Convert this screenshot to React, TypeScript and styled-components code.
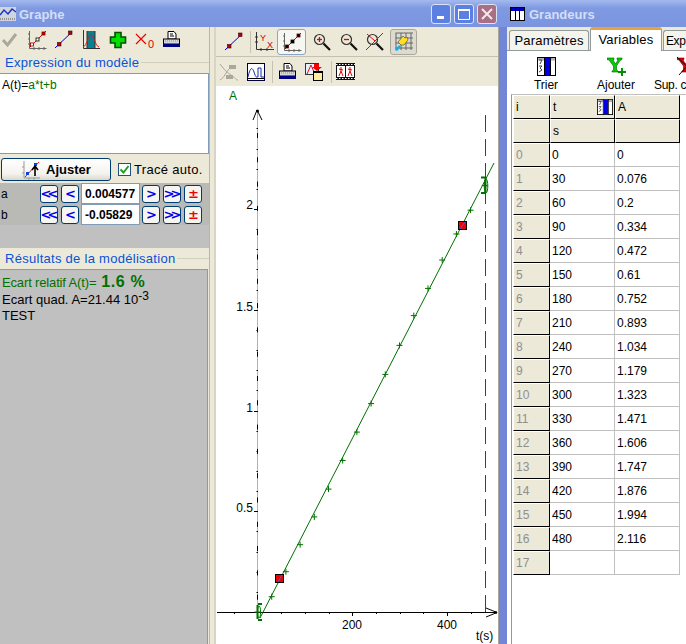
import React from "react";
import styled, { createGlobalStyle } from "styled-components";

const GlobalStyle = createGlobalStyle`
  html, body { margin: 0; padding: 0; background: #fff; }
  * { box-sizing: border-box; }
  #root { width: 686px; height: 644px; overflow: hidden; }
`;

const BEIGE = "#ece9d8";

const measures: [number, number, string][] = [
  [0, 0, "0"],
  [1, 30, "0.076"],
  [2, 60, "0.2"],
  [3, 90, "0.334"],
  [4, 120, "0.472"],
  [5, 150, "0.61"],
  [6, 180, "0.752"],
  [7, 210, "0.893"],
  [8, 240, "1.034"],
  [9, 270, "1.179"],
  [10, 300, "1.323"],
  [11, 330, "1.471"],
  [12, 360, "1.606"],
  [13, 390, "1.747"],
  [14, 420, "1.876"],
  [15, 450, "1.994"],
  [16, 480, "2.116"],
];

const px = (t: number) => 257.5 + 0.4735 * t;
const py = (a: number) => 612 - 201.5 * a;

const PointsIcon = ({ selected }: { selected?: boolean }) => (
  <svg width="20" height="20" viewBox="0 0 20 20">
    <path d="M2.5 1V18.5H19.5M1 14H3M1 9H3M1 4H3M7 17V20M12 17V20M17 17V20" stroke="#666" fill="none" />
    <path d="M3 17L19 1" stroke="#e00000" fill="none" />
    <rect x="3.5" y="13" width="3" height="3" fill={selected ? "#000" : "#fff"} stroke="#700" strokeWidth="0.8" />
    <rect x="9" y="8" width="3" height="3" fill={selected ? "#000" : "#fff"} stroke="#000" strokeWidth="0.8" />
    <rect x="15" y="2" width="3" height="3" fill={selected ? "#000" : "#c00"} stroke="#700" strokeWidth="0.8" />
  </svg>
);

const LineIcon = () => (
  <svg width="20" height="20" viewBox="0 0 20 20">
    <path d="M1 18L18 2" stroke="#0000d8" fill="none" />
    <rect x="3.5" y="12.5" width="3.5" height="3.5" fill="#b00020" stroke="#400" strokeWidth="0.6" />
    <rect x="14.5" y="1" width="3.5" height="3.5" fill="#b00020" stroke="#400" strokeWidth="0.6" />
  </svg>
);

const BellIcon = () => (
  <svg width="20" height="20" viewBox="0 0 20 20">
    <rect x="6" y="1" width="8" height="17" fill="#0a7f8f" />
    <path d="M2.5 0V18.5H19M6 1V18M14 1V18" stroke="#333" fill="none" />
    <path d="M2 17C6 16 7 5 10 5S14 16 18 17" stroke="#f01010" fill="none" />
  </svg>
);

const PlusIcon = () => (
  <svg width="18" height="18" viewBox="0 0 18 18">
    <path d="M6 1.5H12V6H16.5V12H12V16.5H6V12H1.5V6H6Z" fill="#00e000" stroke="#005000" strokeWidth="1.6" />
  </svg>
);

const ZeroIcon = () => (
  <svg width="20" height="18" viewBox="0 0 20 18">
    <path d="M1 3L11 13M11 3L1 13" stroke="#f00000" strokeWidth="1.2" fill="none" />
    <text x="13" y="17" fontFamily="Liberation Sans, sans-serif" fontSize="11" fill="#e00000">0</text>
  </svg>
);

const PrinterIcon = () => (
  <svg width="17" height="17" viewBox="0 0 17 17">
    <path d="M5 .5H11L13 3V8H5Z" fill="#fff" stroke="#000" />
    <path d="M7 3H10M7 5H11" stroke="#000" />
    <rect x=".5" y="8" width="16" height="5" fill="#d8d8d8" stroke="#000" />
    <path d="M2 10H15" stroke="#909090" strokeDasharray="1 1" />
    <rect x="0" y="13" width="17" height="3" fill="#000080" />
  </svg>
);

const CheckMark = () => (
  <svg width="18" height="16" viewBox="0 0 18 16">
    <path d="M2 8L6.5 13L15 2" stroke="#a9a89b" strokeWidth="3" fill="none" />
  </svg>
);

const AxesIcon = () => (
  <svg width="20" height="20" viewBox="0 0 20 20">
    <path d="M1.5 0V17.5H19M0 5H3M0 10H3M6 16V19M12 16V19" stroke="#333" fill="none" />
    <text x="5" y="9" fontFamily="Liberation Sans, sans-serif" fontSize="9" fill="#d00000">Y</text>
    <text x="12" y="16" fontFamily="Liberation Sans, sans-serif" fontSize="9" fill="#d00000">X</text>
  </svg>
);

const ZoomIcon = ({ glyph }: { glyph: "plus" | "minus" | "none" }) => (
  <svg width="18" height="18" viewBox="0 0 18 18">
    <circle cx="6.5" cy="6.5" r="5" fill="none" stroke="#333" strokeWidth="1.2" />
    <path d="M10.5 10.5L17 17" stroke="#111" strokeWidth="2.2" />
    {glyph !== "none" && <path d="M4 6.5H9" stroke="#e00000" strokeWidth="1.3" />}
    {glyph === "plus" && <path d="M6.5 4V9" stroke="#e00000" strokeWidth="1.3" />}
    {glyph === "none" && <path d="M0 17L17 0M1 1L9 8" stroke="#f00000" fill="none" />}
  </svg>
);

const HandGridIcon = () => (
  <svg width="20" height="20" viewBox="0 0 20 20">
    <path d="M1.5 1H19M1.5 6H19M1.5 11H19M1.5 16H19M2 1V18M7 1V18M12 1V18M17 1V18" stroke="#666" fill="none" />
    <path d="M4 10L9 4L11 6L13 5L14 8L10 13L7 13Z" fill="#ffe020" stroke="#555" strokeWidth=".7" />
    <path d="M1 18L5 13L7 15L3 19Z" fill="#10b0f0" />
  </svg>
);

const CurvesIcon = () => (
  <svg width="20" height="20" viewBox="0 0 20 20">
    <path d="M1 2C4 6 7 10 12 13S16 18 19 18M1 18C5 16 7 10 11 6" stroke="#a9a89b" fill="none" />
    <rect x="10" y="3" width="7" height="4" fill="#a9a89b" />
    <rect x="7" y="13" width="7" height="4" fill="#a9a89b" />
  </svg>
);

const ScopeIcon = () => (
  <svg width="18" height="18" viewBox="0 0 18 18">
    <rect x=".5" y=".5" width="17" height="17" fill="#fff" stroke="#000040" />
    <path d="M1 14C3 5 5 3 7 9S9 14 11 14V5H14V14H17" stroke="#1030a0" fill="none" />
    <path d="M1 15.5H17" stroke="#000" />
  </svg>
);

const ExportIcon = () => (
  <svg width="19" height="18" viewBox="0 0 19 18">
    <rect x=".5" y=".5" width="13" height="11" fill="#e8f0ff" stroke="#333" />
    <path d="M2 11L6 2L9 9" stroke="#e01010" fill="none" />
    <rect x="8.5" y="8.5" width="9" height="9" fill="#fff0a0" stroke="#000" />
    <rect x="9" y="8" width="8" height="2" fill="#000" />
    <path d="M9 1H14V4H17L12 8L7 4H9Z" fill="#f00000" />
  </svg>
);

const FilmIcon = () => (
  <svg width="19" height="17" viewBox="0 0 19 17">
    <rect x="0" y="0" width="19" height="17" fill="#111" />
    <path d="M0 1.5H19M0 15.5H19" stroke="#fff" strokeDasharray="1.5 1.5" />
    <rect x="1" y="3" width="8" height="11" fill="#fff" />
    <rect x="10" y="3" width="8" height="11" fill="#fff" />
    <path d="M5 4V8L3 13M5 8L7 13M3 6L7 7M14 4V8L12 13M14 8L16 13M12 6L16 7" stroke="#e00000" fill="none" />
  </svg>
);

const SortIcon = ({ size = 19 }: { size?: number }) => (
  <svg width={size} height={size} viewBox="0 0 19 19">
    <rect x=".5" y=".5" width="18" height="18" fill="#fff" stroke="#000" />
    <rect x="1" y="1" width="17" height="2.5" fill="#b0b0b0" />
    <rect x="8" y="1" width="5" height="17" fill="#0000e0" />
    <path d="M7.5 0V19M13.5 0V19" stroke="#000" />
    <path d="M2 3H5L3 7M2 9H5L3 11L5 13L2 15" stroke="#444" fill="none" />
  </svg>
);

const AddYIcon = () => (
  <svg width="19" height="19" viewBox="0 0 19 19">
    <path d="M0 1H7V2.5L6 3L8.5 7L11 3L10 2.5V1H15V2.5L13 3.5L9.5 9V13L11 14V15H5V14L6.5 13V9L2 3L0 2.5Z" fill="#00d000" stroke="#006000" strokeWidth=".6" />
    <path d="M11 15H19M15 11V19" stroke="#009000" strokeWidth="2" />
  </svg>
);

const RemoveYIcon = () => (
  <svg width="19" height="19" viewBox="0 0 19 19">
    <path d="M0 1H7V2.5L6 3L8.5 7L11 3L10 2.5V1H15V2.5L13 3.5L9.5 9V13L11 14V15H5V14L6.5 13V9L2 3L0 2.5Z" fill="#e80000" stroke="#600" strokeWidth=".6" />
    <path d="M0 0L18 17M18 0L2 18" stroke="#300" fill="none" />
  </svg>
);

const FitIcon = () => (
  <svg width="20" height="20" viewBox="0 0 20 20">
    <path d="M3 1V18H19M1 13H3M1 7H3M8 18V20M13 18V20" stroke="#999" fill="none" />
    <path d="M4 17L18 2" stroke="#f01010" fill="none" />
    <rect x="5" y="12" width="3" height="3" fill="#1040e0" />
    <rect x="13" y="3" width="3" height="3" fill="#1040e0" />
    <path d="M14 6L14 16M11 10L14 6L17 10" stroke="#000" strokeWidth="1.6" fill="none" />
  </svg>
);

const GrapheTitleIcon = () => (
  <svg width="16" height="14" viewBox="0 0 16 14">
    <rect width="16" height="14" fill="#d0d4dc" />
    <path d="M0 12H16" stroke="#555" strokeDasharray="1 1" />
    <path d="M0 8L4 3L8 7L12 2L16 5" stroke="#1530c0" strokeWidth="1.4" fill="none" />
  </svg>
);

const GrandeursTitleIcon = () => (
  <svg width="15" height="14" viewBox="0 0 15 14">
    <rect x=".5" y=".5" width="14" height="13" fill="#fff" stroke="#000" />
    <rect x="1" y="1" width="13" height="3" fill="#0000c0" />
    <path d="M5.5 1V13M9.5 1V13" stroke="#000" />
  </svg>
);

const Graph = () => {
  const ticksY = Array.from({ length: 24 }, (_, i) => i + 1);
  const ticksX = [-1, 1, 2, 3, 4, 5, 6, 7, 8, 9];
  return (
    <GraphCanvas width="282" height="558" viewBox="216 86 282 558">
      <text x="229" y="100" fontFamily="Liberation Sans, sans-serif" fontSize="12" fill="#007000">A</text>
      <path d="M257.5 112V612" stroke="#ff80f4" fill="none" />
      <path d="M257.5 133V612" stroke="#000" strokeDasharray="5 19.3" fill="none" />
      {ticksY.map((i) => (
        <path
          key={i}
          d={`M${i % 5 === 0 ? 254 : 256.5} ${py(i / 10).toFixed(0)}.5H258`}
          stroke="#000"
          fill="none"
        />
      ))}
      <path d="M253 120L257 110L262 120" stroke="#000" fill="none" />
      <circle cx="257.5" cy="111" r="1.5" fill="#000" />
      <path d="M217 612.5H496" stroke="#000" />
      <path d="M486 608L497 612.5L486 617" stroke="#000" fill="none" />
      <circle cx="496" cy="612.5" r="1.2" fill="#000" />
      {ticksX.map((i) => (
        <path
          key={i}
          d={`M${px(i * 50).toFixed(0)}.5 612V${i % 4 === 0 ? 616 : 614}`}
          stroke="#000"
          fill="none"
        />
      ))}
      <g fontFamily="Liberation Sans, sans-serif" fontSize="12" fill="#000">
        <text x="253" y="209" textAnchor="end">2</text>
        <text x="253" y="311" textAnchor="end">1.5</text>
        <text x="253" y="412" textAnchor="end">1</text>
        <text x="253" y="512" textAnchor="end">0.5</text>
        <text x="352" y="629" textAnchor="middle">200</text>
        <text x="447" y="629" textAnchor="middle">400</text>
        <text x="476" y="640">t(s)</text>
      </g>
      <path d="M485.5 115V612" stroke="#007000" strokeDasharray="17 7" fill="none" />
      <path d="M260 618L494 163" stroke="#007000" fill="none" />
      {measures.map(([i, t, a]) => (
        <path
          key={i}
          d={`M${(px(t) - 3).toFixed(1)} ${py(Number(a)).toFixed(1)}h6m-3 -3v6`}
          stroke="#007000"
          fill="none"
        />
      ))}
      <path d="M257.5 605V619" stroke="#007000" strokeWidth="2" fill="none" />
      <ellipse cx="259" cy="612" rx="1.6" ry="6" stroke="#007000" fill="none" />
      <path d="M258 604h4M258 620h4" stroke="#007000" strokeWidth="2" fill="none" />
      <path d="M485.5 177V193" stroke="#007000" strokeWidth="2" fill="none" />
      <ellipse cx="486" cy="186" rx="1.8" ry="7" stroke="#007000" fill="none" />
      <path d="M481 177.5h5M481 193h5" stroke="#007000" strokeWidth="2" fill="none" />
      <rect x="275.5" y="574.5" width="8" height="8" fill="#f00000" stroke="#000" />
      <rect x="458.5" y="221.5" width="8" height="8" fill="#f00000" stroke="#000" />
      <path d="M278 582L282 575M460 229L465 222" stroke="#4060e0" fill="none" />
    </GraphCanvas>
  );
};

export default function App() {
  return (
    <Desktop>
      <GlobalStyle />
      <GrapheWindow>
        <TitleBar>
          <GrapheTitleIcon />
          <TitleText>Graphe</TitleText>
          <WindowButtons>
            <WindowButton>
              <svg width="10" height="10" viewBox="0 0 10 10">
                <rect x="1" y="7" width="7" height="3" fill="#fff" />
              </svg>
            </WindowButton>
            <WindowButton>
              <svg width="12" height="12" viewBox="0 0 12 12">
                <path d="M.5 2.5H11.5V11.5H.5Z" fill="none" stroke="#fff" />
                <rect x="0" y="1" width="12" height="2" fill="#fff" />
              </svg>
            </WindowButton>
            <WindowButton $close>
              <svg width="12" height="12" viewBox="0 0 12 12">
                <path d="M1 1L11 11M11 1L1 11" stroke="#f4e8e8" strokeWidth="2" />
              </svg>
            </WindowButton>
          </WindowButtons>
        </TitleBar>
        <GrapheBody>
          <ModelPanel>
            <ModelToolbar>
              <ToolButton $w={27}><CheckMark /></ToolButton>
              <ToolButton $w={27}><PointsIcon /></ToolButton>
              <ToolButton $w={27}><LineIcon /></ToolButton>
              <ToolButton $w={27}><BellIcon /></ToolButton>
              <ToolButton $w={27}><PlusIcon /></ToolButton>
              <ToolButton $w={27}><ZeroIcon /></ToolButton>
              <ToolButton $w={27}><PrinterIcon /></ToolButton>
            </ModelToolbar>
            <Legend>Expression du modèle</Legend>
            <ExpressionBox>
              A(t)=<Green>a*t+b</Green>
            </ExpressionBox>
            <FitRow>
              <FitButton>
                <FitIcon />
                Ajuster
              </FitButton>
              <AutoCheck>
                <CheckBox>
                  <svg width="11" height="11" viewBox="0 0 11 11">
                    <path d="M1.5 5.5L4.5 8.5L9.5 2" stroke="#20a020" strokeWidth="2" fill="none" />
                  </svg>
                </CheckBox>
                Tracé auto.
              </AutoCheck>
            </FitRow>
            <ParamsArea>
              <ParamRow name="a" value="0.004577" />
              <ParamRow name="b" value="-0.05829" />
            </ParamsArea>
            <Legend>Résultats de la modélisation</Legend>
            <ResultsBox>
              <GapLine>
                <GapLabel>Ecart relatif A(t)=</GapLabel>
                <BigValue>1.6 %</BigValue>
              </GapLine>
              <QuadLine>
                Ecart quad. A=21.44 10<Sup>-3</Sup>
              </QuadLine>
              <PlainLine>TEST</PlainLine>
            </ResultsBox>
          </ModelPanel>
          <Splitter />
          <GraphPanel>
            <GraphToolbar>
              <ToolButton $w={28}><LineIcon /></ToolButton>
              <ToolSep />
              <ToolButton $w={24}><AxesIcon /></ToolButton>
              <ToolButton $w={29} $state="on"><PointsIcon selected /></ToolButton>
              <ToolButton $w={32}><ZoomIcon glyph="plus" /></ToolButton>
              <ToolButton $w={22}><ZoomIcon glyph="minus" /></ToolButton>
              <ToolButton $w={30}><ZoomIcon glyph="none" /></ToolButton>
              <ToolButton $w={27} $state="down"><HandGridIcon /></ToolButton>
            </GraphToolbar>
            <GraphToolbarSecond>
              <ToolButton $w={26}><CurvesIcon /></ToolButton>
              <ToolButton $w={28}><ScopeIcon /></ToolButton>
              <ToolSep />
              <ToolButton $w={24}><PrinterIcon /></ToolButton>
              <ToolButton $w={30}><ExportIcon /></ToolButton>
              <ToolSep />
              <ToolButton $w={22}><FilmIcon /></ToolButton>
            </GraphToolbarSecond>
            <Graph />
          </GraphPanel>
        </GrapheBody>
      </GrapheWindow>
      <GrandeursWindow>
        <GrandeursTitle>
          <GrandeursTitleIcon />
          <TitleText>Grandeurs</TitleText>
        </GrandeursTitle>
        <TabRow>
          <Tab $w={80}>Paramètres</Tab>
          <Tab $w={72} $active>Variables</Tab>
          <LastTab>Exp</LastTab>
        </TabRow>
        <TabPage>
          <VarToolbar>
            <VarTool><SortIcon /><span>Trier</span></VarTool>
            <VarTool><AddYIcon /><span>Ajouter</span></VarTool>
            <LastVarTool><RemoveYIcon /><span>Sup. c</span></LastVarTool>
          </VarToolbar>
          <GridFrame>
            <DataGrid>
              <FixedCell>i</FixedCell>
              <FixedCell>
                t
                <HeaderIcon><SortIcon size={16} /></HeaderIcon>
              </FixedCell>
              <FixedCell>A</FixedCell>
              <FixedCell />
              <FixedCell>s</FixedCell>
              <FixedCell />
              {measures.map(([i, t, a]) => (
                <React.Fragment key={i}>
                  <IndexCell>{i}</IndexCell>
                  <DataCell>{t}</DataCell>
                  <DataCell>{a}</DataCell>
                </React.Fragment>
              ))}
              <IndexCell>17</IndexCell>
              <DataCell />
              <DataCell />
            </DataGrid>
          </GridFrame>
        </TabPage>
      </GrandeursWindow>
    </Desktop>
  );
}

const ParamRow = ({ name, value }: { name: string; value: string }) => (
  <ParamLine>
    <ParamName>{name}</ParamName>
    <StepButton>&lt;&lt;</StepButton>
    <StepButton>&lt;</StepButton>
    <ParamValue>{value}</ParamValue>
    <StepButton>&gt;</StepButton>
    <StepButton>&gt;&gt;</StepButton>
    <StepButton $red>±</StepButton>
  </ParamLine>
);

const Desktop = styled.div`
  display: flex;
  width: 686px;
  height: 644px;
  overflow: hidden;
  background: #7286d8;
  font-family: "Liberation Sans", Arial, sans-serif;
  font-size: 12px;
  color: #000;
`;

const GrapheWindow = styled.div`
  display: flex;
  flex-direction: column;
  width: 503px;
  flex: none;
  padding-right: 4px;
  background: #7286d8;
`;

const GrandeursWindow = styled.div`
  display: flex;
  flex-direction: column;
  width: 183px;
  flex: none;
  padding-left: 4px;
  background: #7286d8;
`;

const TitleBar = styled.div`
  display: flex;
  align-items: center;
  height: 27px;
  flex: none;
  gap: 3px;
  margin-right: -4px;
  padding-top: 1px;
  background: linear-gradient(#a3b9ee, #7f9ae2 30%, #7a94df);
`;

const GrandeursTitle = styled(TitleBar)`
  margin: 0 0 0 -4px;
  padding-left: 7px;
  gap: 4px;
`;

const TitleText = styled.span`
  font-size: 13px;
  font-weight: bold;
  color: #d3def7;
`;

const WindowButtons = styled.div`
  display: flex;
  gap: 3px;
  margin-left: auto;
  margin-right: 6px;
`;

const WindowButton = styled.div<{ $close?: boolean }>`
  display: flex;
  align-items: center;
  justify-content: center;
  width: 20px;
  height: 20px;
  border: 1px solid #dbe3f8;
  border-radius: 3px;
  background: ${({ $close }) => ($close ? "#a86f85" : "#5c7fe2")};
`;

const GrapheBody = styled.div`
  display: flex;
  flex: 1;
  min-height: 0;
  background: ${BEIGE};
`;

const ModelPanel = styled.div`
  display: flex;
  flex-direction: column;
  width: 209px;
  flex: none;
`;

const ModelToolbar = styled.div`
  display: flex;
  align-items: center;
  height: 25px;
  flex: none;
  margin-left: -4px;
`;

const ToolButton = styled.div<{ $w: number; $state?: "on" | "down" }>`
  display: flex;
  align-items: center;
  justify-content: center;
  width: ${({ $w }) => $w}px;
  height: 26px;
  flex: none;
  border-radius: 3px;
  border: 1px solid
    ${({ $state }) =>
      $state === "on" ? "#8ba6c4" : $state === "down" ? "#aaa89c" : "transparent"};
  background: ${({ $state }) =>
    $state === "on" ? "#f6f6f2" : $state === "down" ? "#dddbcf" : "transparent"};
`;

const ToolSep = styled.div`
  width: 1px;
  height: 22px;
  margin: 0 2px;
  background: #c4c1b0;
  flex: none;
`;

const Legend = styled.div`
  display: flex;
  align-items: center;
  gap: 2px;
  height: 21px;
  flex: none;
  padding-left: 5px;
  font-size: 13px;
  letter-spacing: 0.28px;
  color: #0a50d8;
  &::after {
    content: "";
    flex: 1;
    height: 1px;
    background: #d0d0bf;
  }
`;

const ExpressionBox = styled.div`
  height: 81px;
  flex: none;
  padding: 4px 2px;
  background: #fff;
  border: 1px solid #7f9db9;
  border-width: 1px 1px 1px 0;
  font-size: 12px;
`;

const Green = styled.span`
  color: #007000;
`;

const FitRow = styled.div`
  display: flex;
  align-items: center;
  height: 29px;
  flex: none;
  gap: 7px;
  padding: 2px 0 0 1px;
`;

const FitButton = styled.div`
  display: flex;
  align-items: center;
  justify-content: center;
  gap: 5px;
  width: 110px;
  height: 23px;
  border: 1px solid #003c74;
  border-radius: 3px;
  background: linear-gradient(#fff, #f4f3ee 70%, #dcd8c8);
  font-size: 13px;
  font-weight: bold;
`;

const AutoCheck = styled.div`
  display: flex;
  align-items: center;
  gap: 3px;
  font-size: 13px;
  letter-spacing: 0.3px;
`;

const CheckBox = styled.div`
  display: flex;
  align-items: center;
  justify-content: center;
  width: 13px;
  height: 13px;
  background: #fff;
  border: 1px solid #1c5180;
`;

const ParamsArea = styled.div`
  display: flex;
  flex-direction: column;
  height: 65px;
  flex: none;
  background: #c0c0c0;
`;

const ParamLine = styled.div`
  display: flex;
  align-items: center;
  gap: 3px;
  height: 21px;
  flex: none;
  background: #b9b9b5;
`;

const ParamName = styled.span`
  width: 37px;
  padding-left: 1px;
  flex: none;
  font-size: 12px;
`;

const StepButton = styled.div<{ $red?: boolean }>`
  display: flex;
  align-items: center;
  justify-content: center;
  width: 18px;
  height: 18px;
  flex: none;
  border: 1px solid #003c74;
  border-radius: 3px;
  background: #f6f5ef;
  color: ${({ $red }) => ($red ? "#f00000" : "#0000f0")};
  font-family: "DejaVu Sans", sans-serif;
  font-size: 13px;
  font-weight: bold;
  letter-spacing: -4px;
  padding-right: 3px;
`;

const ParamValue = styled.div`
  width: 59px;
  height: 21px;
  margin: 0 -1px;
  padding: 3px 0 0 3px;
  flex: none;
  background: #fff;
  border: 1px solid #7f9db9;
  font-weight: bold;
  font-size: 12px;
`;

const ResultsBox = styled.div`
  flex: 1;
  min-height: 0;
  margin-right: 1px;
  padding: 3px 2px;
  background: #c0c0c0;
  border: 1px solid #7f9db9;
  border-width: 1px 1px 0 0;
`;

const GapLine = styled.div`
  display: flex;
  align-items: baseline;
  gap: 5px;
  height: 19px;
  font-size: 13px;
`;

const GapLabel = styled.span`
  color: #007000;
  letter-spacing: -0.15px;
`;

const BigValue = styled.span`
  font-size: 16px;
  font-weight: bold;
  letter-spacing: 0.6px;
  color: #007000;
`;

const QuadLine = styled.div`
  height: 16px;
  line-height: 16px;
  font-size: 13px;
`;

const Sup = styled.sup`
  font-size: 12px;
  line-height: 0;
  vertical-align: 4px;
`;

const PlainLine = styled.div`
  height: 16px;
  line-height: 15px;
  font-size: 13px;
`;

const Splitter = styled.div`
  width: 7px;
  flex: none;
  background: ${BEIGE};
  border-left: 1px solid #b8b6a6;
  border-right: 2px solid #d8d5c4;
`;

const GraphPanel = styled.div`
  display: flex;
  flex-direction: column;
  flex: 1;
  min-width: 0;
  border-right: 1px solid #a7a69b;
`;

const GraphToolbar = styled.div`
  display: flex;
  align-items: center;
  height: 30px;
  flex: none;
  padding: 1px 0 0 4px;
  border-bottom: 1px solid #c4c1b0;
`;

const GraphToolbarSecond = styled(GraphToolbar)`
  height: 29px;
  padding: 0;
  border-bottom: none;
`;

const GraphCanvas = styled.svg`
  display: block;
  flex: none;
  background: #fff;
`;

const TabRow = styled.div`
  display: flex;
  align-items: flex-end;
  gap: 1px;
  height: 23px;
  flex: none;
  padding-left: 2px;
  background: ${BEIGE};
`;

const Tab = styled.div<{ $w: number; $active?: boolean }>`
  position: relative;
  z-index: 1;
  display: flex;
  align-items: center;
  justify-content: center;
  width: ${({ $w }) => $w}px;
  height: ${({ $active }) => ($active ? 24 : 20)}px;
  margin-bottom: ${({ $active }) => ($active ? -1 : 0)}px;
  padding-bottom: ${({ $active }) => ($active ? 2 : 0)}px;
  flex: none;
  font-size: 13px;
  letter-spacing: 0.2px;
  background: ${({ $active }) => ($active ? "#fff" : "#f4f3ec")};
  border: 1px solid #919b9c;
  border-bottom: none;
  border-top: ${({ $active }) => ($active ? "3px solid #e8a33c" : "1px solid #919b9c")};
  border-radius: 3px 3px 0 0;
`;

const LastTab = styled.div`
  display: flex;
  align-items: center;
  flex: 1;
  height: 20px;
  padding-left: 2px;
  background: #f4f3ec;
  border: 1px solid #919b9c;
  border-width: 1px 0 0 1px;
  border-radius: 3px 0 0 0;
  font-size: 12px;
  letter-spacing: -0.4px;
  white-space: nowrap;
`;

const TabPage = styled.div`
  flex: 1;
  min-height: 0;
  display: flex;
  flex-direction: column;
  background: #fff;
  border-top: 1px solid #919b9c;
`;

const VarToolbar = styled.div`
  display: flex;
  height: 43px;
  flex: none;
  padding: 6px 0 0 4px;
`;

const VarTool = styled.div`
  display: flex;
  flex-direction: column;
  align-items: center;
  width: 70px;
  flex: none;
  gap: 2px;
  white-space: nowrap;
  font-size: 12px;
`;

const LastVarTool = styled(VarTool)`
  width: 35px;
  align-items: flex-start;
  padding-left: 3px;
  letter-spacing: -0.3px;
  svg {
    margin-left: 23px;
  }
`;

const GridFrame = styled.div`
  flex: 1;
  min-height: 0;
  margin-left: 4px;
  padding-left: 1px;
  border-top: 1px solid #c0c0c0;
  border-left: 1px solid #7f9db9;
`;

const DataGrid = styled.div`
  display: grid;
  grid-template-columns: 37px 65px 65px;
  grid-auto-rows: 24px;
  width: 167px;
`;

const FixedCell = styled.div`
  position: relative;
  display: flex;
  align-items: center;
  padding-left: 2px;
  background: ${BEIGE};
  border-right: 1px solid #000;
  border-bottom: 1px solid #000;
  border-top: 1px solid #fff;
  border-left: 1px solid #fff;
  font-size: 12px;
`;

const IndexCell = styled(FixedCell)`
  color: #8f8f8f;
`;

const HeaderIcon = styled.div`
  position: absolute;
  right: 1px;
  top: 3px;
  line-height: 0;
`;

const DataCell = styled.div`
  display: flex;
  align-items: center;
  padding-left: 2px;
  background: #fff;
  border-right: 1px solid #c0c0c0;
  border-bottom: 1px solid #c0c0c0;
  font-size: 12px;
`;
